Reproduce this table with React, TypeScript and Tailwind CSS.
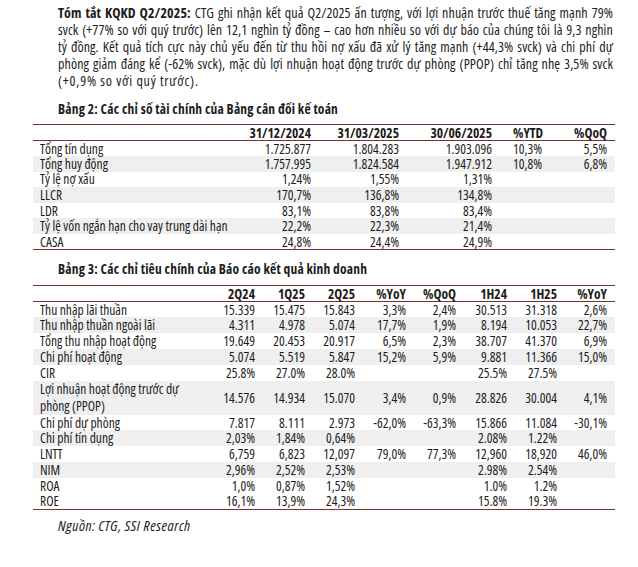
import React from "react";

type Row2 = [string, string, string, string, string, string];
const t2: Row2[] = [
  ["Tổng tín dụng", "1.725.877", "1.804.283", "1.903.096", "10,3%", "5,5%"],
  ["Tổng huy động", "1.757.995", "1.824.584", "1.947.912", "10,8%", "6,8%"],
  ["Tỷ lệ nợ xấu", "1,24%", "1,55%", "1,31%", "", ""],
  ["LLCR", "170,7%", "136,8%", "134,8%", "", ""],
  ["LDR", "83,1%", "83,8%", "83,4%", "", ""],
  ["Tỷ lệ vốn ngắn hạn cho vay trung dài hạn", "22,2%", "22,3%", "21,4%", "", ""],
  ["CASA", "24,8%", "24,4%", "24,9%", "", ""],
];

const t3: { l: React.ReactNode; v: string[]; g: boolean; tall?: boolean }[] = [
  { l: "Thu nhập lãi thuần", v: ["15.339", "15.475", "15.843", "3,3%", "2,4%", "30.513", "31.318", "2,6%"], g: false },
  { l: "Thu nhập thuần ngoài lãi", v: ["4.311", "4.978", "5.074", "17,7%", "1,9%", "8.194", "10.053", "22,7%"], g: true },
  { l: "Tổng thu nhập hoạt động", v: ["19.649", "20.453", "20.917", "6,5%", "2,3%", "38.707", "41.370", "6,9%"], g: false },
  { l: "Chi phí hoạt động", v: ["5.074", "5.519", "5.847", "15,2%", "5,9%", "9.881", "11.366", "15,0%"], g: true },
  { l: "CIR", v: ["25.8%", "27.0%", "28.0%", "", "", "25.5%", "27.5%", ""], g: false },
  {
    l: (
      <>
        Lợi nhuận hoạt động trước dự
        <br />
        phòng (PPOP)
      </>
    ),
    v: ["14.576", "14.934", "15.070", "3,4%", "0,9%", "28.826", "30.004", "4,1%"],
    g: true,
    tall: true,
  },
  { l: "Chi phí dự phòng", v: ["7.817", "8.111", "2.973", "-62,0%", "-63,3%", "15.866", "11.084", "-30,1%"], g: false },
  { l: "Chi phí tín dụng", v: ["2,03%", "1,84%", "0,64%", "", "", "2.08%", "1.22%", ""], g: true },
  { l: "LNTT", v: ["6,759", "6,823", "12,097", "79,0%", "77,3%", "12,960", "18,920", "46,0%"], g: false },
  { l: "NIM", v: ["2,96%", "2,52%", "2,53%", "", "", "2.98%", "2.54%", ""], g: true },
  { l: "ROA", v: ["1,0%", "0,87%", "1,52%", "", "", "1.0%", "1.2%", ""], g: false },
  { l: "ROE", v: ["16,1%", "13,9%", "24,3%", "", "", "15.8%", "19.3%", ""], g: false },
];

const t3w = [172, 50, 50, 50, 51, 50, 51, 50, 58];
const t3h = ["", "2Q24", "1Q25", "2Q25", "%YoY", "%QoQ", "1H24", "1H25", "%YoY"];

const lines = [
  "svck (+77% so với quý trước) lên 12,1 nghìn tỷ đồng – cao hơn nhiều so với dự báo của chúng tôi là 9,3 nghìn",
  "tỷ đồng. Kết quả tích cực này chủ yếu đến từ thu hồi nợ xấu đã xử lý tăng mạnh (+44,3% svck) và chi phí dự",
  "phòng giảm đáng kể (-62% svck), mặc dù lợi nhuận hoạt động trước dự phòng (PPOP) chỉ tăng nhẹ 3,5% svck",
];

const J = "text-justify [text-align-last:justify] whitespace-nowrap";
const cell = "leading-[14px]";

export default function App() {
  return (
    <div className="w-[638px] h-[567px] bg-white text-[#1c1c1c] overflow-hidden font-['Open_Sans',sans-serif] [font-stretch:75%]">
      <div className="pl-[58px] pr-[25px] pt-[4px] text-[14px] leading-[17px] tracking-[0.1px]">
        <div className={J}>
          <span className="font-bold">Tóm tắt KQKD Q2/2025:</span> CTG ghi nhận kết quả Q2/2025 ấn tượng, với lợi nhuận
          trước thuế tăng mạnh 79%
        </div>
        {lines.map((l, i) => (
          <div key={i} className={J}>
            {l}
          </div>
        ))}
        <div className="tracking-[0.8px]">(+0,9% so với quý trước).</div>
      </div>

      <div className="pl-[58px] mt-[12px] text-[13.5px] font-bold leading-[16px] tracking-[0.2px]">
        Bảng 2: Các chỉ số tài chính của Bảng cân đối kế toán
      </div>

      <div className="pl-[33px] mt-[7px]">
        <table className="w-[582px] table-fixed border-collapse text-[13.5px]">
          <colgroup>
            <col className="w-[207px]" />
            <col className="w-[71px]" />
            <col className="w-[88px]" />
            <col className="w-[93px]" />
            <col className="w-[68px]" />
            <col className="w-[55px]" />
          </colgroup>
          <thead>
            <tr className="border-t-[1.5px] border-b-[1.5px] border-[#7a2e2e]">
              <th className={"h-[16px] " + cell}></th>
              <th className={"text-right font-bold " + cell}>31/12/2024</th>
              <th className={"text-right font-bold " + cell}>31/03/2025</th>
              <th className={"text-right font-bold " + cell}>30/06/2025</th>
              <th className={"text-left pl-[21px] font-bold " + cell}>%YTD</th>
              <th className={"text-right pr-[8px] font-bold " + cell}>%QoQ</th>
            </tr>
          </thead>
          <tbody className="border-b-[1.5px] border-[#7a2e2e]">
            {t2.map((r, i) => (
              <tr key={i} className={i % 2 === 1 ? "bg-[#efefef]" : ""}>
                <td className={"h-[15.6px] pl-[7px] whitespace-nowrap " + cell}>{r[0]}</td>
                <td className={"text-right " + cell}>{r[1]}</td>
                <td className={"text-right " + cell}>{r[2]}</td>
                <td className={"text-right " + cell}>{r[3]}</td>
                <td className={"text-left pl-[21px] " + cell}>{r[4]}</td>
                <td className={"text-right pr-[8px] " + cell}>{r[5]}</td>
              </tr>
            ))}
          </tbody>
        </table>
      </div>

      <div className="pl-[58px] mt-[11px] text-[13.5px] font-bold leading-[16px] tracking-[0.2px]">
        Bảng 3: Các chỉ tiêu chính của Báo cáo kết quả kinh doanh
      </div>

      <div className="pl-[33px] mt-[8px]">
        <table className="w-[582px] table-fixed border-collapse text-[13.5px]">
          <colgroup>
            {t3w.map((w, i) => (
              <col key={i} style={{ width: w }} />
            ))}
          </colgroup>
          <thead>
            <tr className="border-t-[1.5px] border-b-[1.5px] border-[#7a2e2e]">
              {t3h.map((h, i) => (
                <th key={i} className={"h-[16px] text-right font-bold " + cell + (i === 8 ? " pr-[8px]" : "")}>
                  {h}
                </th>
              ))}
            </tr>
          </thead>
          <tbody className="border-b-[1.5px] border-[#7a2e2e]">
            {t3.map((r, i) => (
              <tr key={i} className={r.g ? "bg-[#efefef]" : ""}>
                <td className={"pl-[7px] whitespace-nowrap " + (r.tall ? "h-[32px] leading-[17px]" : "h-[15.8px] " + cell)}>
                  {r.l}
                </td>
                {r.v.map((v, j) => (
                  <td key={j} className={"text-right whitespace-nowrap " + cell + (j === 7 ? " pr-[8px]" : "")}>
                    {v}
                  </td>
                ))}
              </tr>
            ))}
          </tbody>
        </table>
      </div>

      <div className="pl-[58px] mt-[7px] text-[15px] italic leading-[16px] tracking-[0.5px]">Nguồn: CTG, SSI Research</div>
    </div>
  );
}
